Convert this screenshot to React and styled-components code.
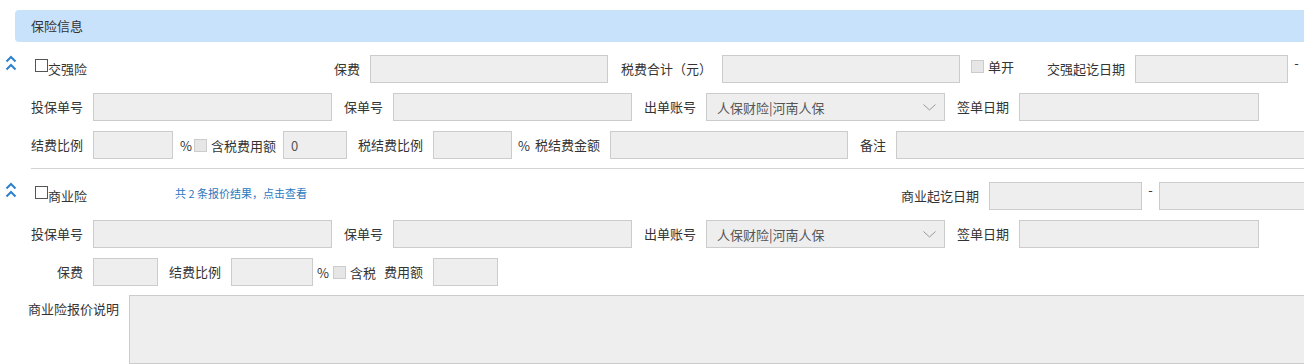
import React from 'react'
import styled, { createGlobalStyle } from 'styled-components'

const GlobalStyle = createGlobalStyle`
  body {
    margin: 0;
    overflow: hidden;
    background: #fff;
    font-family: "Noto Sans CJK SC", "Noto Sans", sans-serif;
    font-size: 13px;
    color: #333;
  }
`

const Page = styled.div`
  width: 1600px;
  padding-top: 10px;
`

const Header = styled.div`
  margin-left: 15px;
  height: 32px;
  line-height: 32px;
  padding-left: 16px;
  background: #c9e2fb;
  border-radius: 4px 0 0 4px;
  font-size: 13px;
  color: #333;
`

const Body = styled.div`
  margin-top: 13px;
`

const Row = styled.div`
  display: flex;
  align-items: ${(p) => (p.$top ? 'flex-start' : 'center')};
  min-height: 28px;
  margin-bottom: ${(p) => (p.$mb ?? 10)}px;
`

const Divider = styled.div`
  height: 1px;
  background: #d3d3d3;
  margin: 0 0 13px 31px;
`

const Head = styled.div`
  display: flex;
  align-items: flex-start;
  align-self: stretch;
  width: ${(p) => p.$w}px;
  flex-shrink: 0;
`

const Toggle = styled.svg`
  margin-left: 5px;
  margin-right: 18px;
  flex-shrink: 0;
`

const MainCheck = styled.span`
  display: inline-block;
  width: 13px;
  height: 13px;
  margin-top: 4px;
  box-sizing: border-box;
  border: 1px solid #555;
  background: #fff;
  flex-shrink: 0;
`

const HeadText = styled.span`
  line-height: 28px;
  white-space: nowrap;
`

const Label = styled.label`
  width: ${(p) => p.$w}px;
  flex-shrink: 0;
  box-sizing: border-box;
  padding-right: 10px;
  text-align: right;
  white-space: nowrap;
  line-height: 28px;
  color: #333;
`

const Input = styled.input`
  width: ${(p) => p.$w}px;
  height: ${(p) => p.$h ?? 28}px;
  flex-shrink: 0;
  box-sizing: border-box;
  margin: 0;
  padding: 0 7px;
  border: 1px solid #ccc;
  border-radius: 0;
  background: #eee;
  font-family: inherit;
  font-size: 13px;
  color: #555;
  outline: none;
`

const Area = styled.textarea`
  width: ${(p) => p.$w}px;
  height: 69px;
  flex-shrink: 0;
  box-sizing: border-box;
  margin: 0;
  border: 1px solid #ccc;
  background: #eee;
  resize: none;
  outline: none;
`

const Select = styled.div`
  width: ${(p) => p.$w}px;
  height: 28px;
  flex-shrink: 0;
  box-sizing: border-box;
  display: flex;
  align-items: center;
  justify-content: space-between;
  padding: 0 8px 0 10px;
  border: 1px solid #ccc;
  background: #eee;
  color: #555;
  white-space: nowrap;
`

const CheckText = styled.span`
  display: flex;
  align-items: center;
  gap: 4px;
  width: ${(p) => p.$w}px;
  margin-left: ${(p) => p.$ml ?? 0}px;
  flex-shrink: 0;
  white-space: nowrap;
  ${(p) => p.$top && 'align-self: flex-start; margin-top: 3px; line-height: 17px;'}
`

const Box = styled.span`
  display: inline-block;
  width: 13px;
  height: 13px;
  box-sizing: border-box;
  border: 1px solid #ccc;
  background: #e6e6e6;
  flex-shrink: 0;
`

const Pct = styled.span`
  width: ${(p) => p.$w}px;
  margin-left: ${(p) => p.$ml}px;
  flex-shrink: 0;
`

const Dash = styled.span`
  width: 17px;
  flex-shrink: 0;
  align-self: flex-start;
  line-height: 16px;
  text-align: center;
`

const Link = styled.a`
  width: ${(p) => p.$w}px;
  flex-shrink: 0;
  align-self: flex-start;
  line-height: 23px;
  font-size: 11px;
  color: #2b79c2;
  white-space: nowrap;
  cursor: pointer;
`

const Chevrons = () => (
  <Toggle width='12' height='17' viewBox='0 0 12 17'>
    <g fill='none' stroke='#2f80ca' strokeWidth='2' strokeLinejoin='miter'>
      <polyline points='1.5,6.5 6,2 10.5,6.5' />
      <polyline points='1.5,14.5 6,10 10.5,14.5' />
    </g>
  </Toggle>
)

const Arrow = () => (
  <svg width='13' height='7' viewBox='0 0 13 7'>
    <polyline points='0.5,0.5 6.5,6 12.5,0.5' fill='none' stroke='#999' strokeWidth='1' />
  </svg>
)

const PolicyRow = () => (
  <Row>
    <Label $w={93}>投保单号</Label>
    <Input $w={239} readOnly />
    <Label $w={61}>保单号</Label>
    <Input $w={239} readOnly />
    <Label $w={74}>出单账号</Label>
    <Select $w={239}>
      <span>人保财险|河南人保</span>
      <Arrow />
    </Select>
    <Label $w={74}>签单日期</Label>
    <Input $w={240} readOnly />
  </Row>
)

const App = () => {
  return (
    <Page>
      <GlobalStyle />
      <Header>保险信息</Header>
      <Body>
        <Row>
          <Head $w={120}>
            <Chevrons />
            <MainCheck />
            <HeadText>交强险</HeadText>
          </Head>
          <Label $w={250}>保费</Label>
          <Input $w={238} readOnly />
          <Label $w={114}>税费合计（元）</Label>
          <Input $w={238} readOnly />
          <CheckText $w={43} $ml={11} $top>
            <Box />
            单开
          </CheckText>
          <Label $w={121}>交强起讫日期</Label>
          <Input $w={153} readOnly />
          <Dash>-</Dash>
        </Row>
        <PolicyRow />
        <Row $mb={9}>
          <Label $w={93}>结费比例</Label>
          <Input $w={80} readOnly />
          <Pct $w={13} $ml={7}>%</Pct>
          <CheckText $w={89} $ml={1}>
            <Box />
            含税费用额
          </CheckText>
          <Input $w={64} readOnly defaultValue='0' />
          <Label $w={86}>税结费比例</Label>
          <Input $w={79} readOnly />
          <Pct $w={13} $ml={6}>%</Pct>
          <Label $w={79}>税结费金额</Label>
          <Input $w={238} readOnly />
          <Label $w={48}>备注</Label>
          <Input $w={500} readOnly />
        </Row>
        <Divider />
        <Row>
          <Head $w={175}>
            <Chevrons />
            <MainCheck />
            <HeadText>商业险</HeadText>
          </Head>
          <Link $w={725}>共 2 条报价结果，点击查看</Link>
          <Label $w={89}>商业起讫日期</Label>
          <Input $w={153} readOnly />
          <Dash>-</Dash>
          <Input $w={239} readOnly />
        </Row>
        <PolicyRow />
        <Row $mb={9}>
          <Label $w={93}>保费</Label>
          <Input $w={65} readOnly />
          <Label $w={73}>结费比例</Label>
          <Input $w={82} readOnly />
          <Pct $w={15} $ml={4}>%</Pct>
          <CheckText $w={43} $ml={1}>
            <Box />
            含税
          </CheckText>
          <Label $w={57}>费用额</Label>
          <Input $w={65} readOnly />
        </Row>
        <Row $top $mb={0}>
          <Label $w={129}>商业险报价说明</Label>
          <Area $w={1300} readOnly />
        </Row>
      </Body>
    </Page>
  )
}

export default App
